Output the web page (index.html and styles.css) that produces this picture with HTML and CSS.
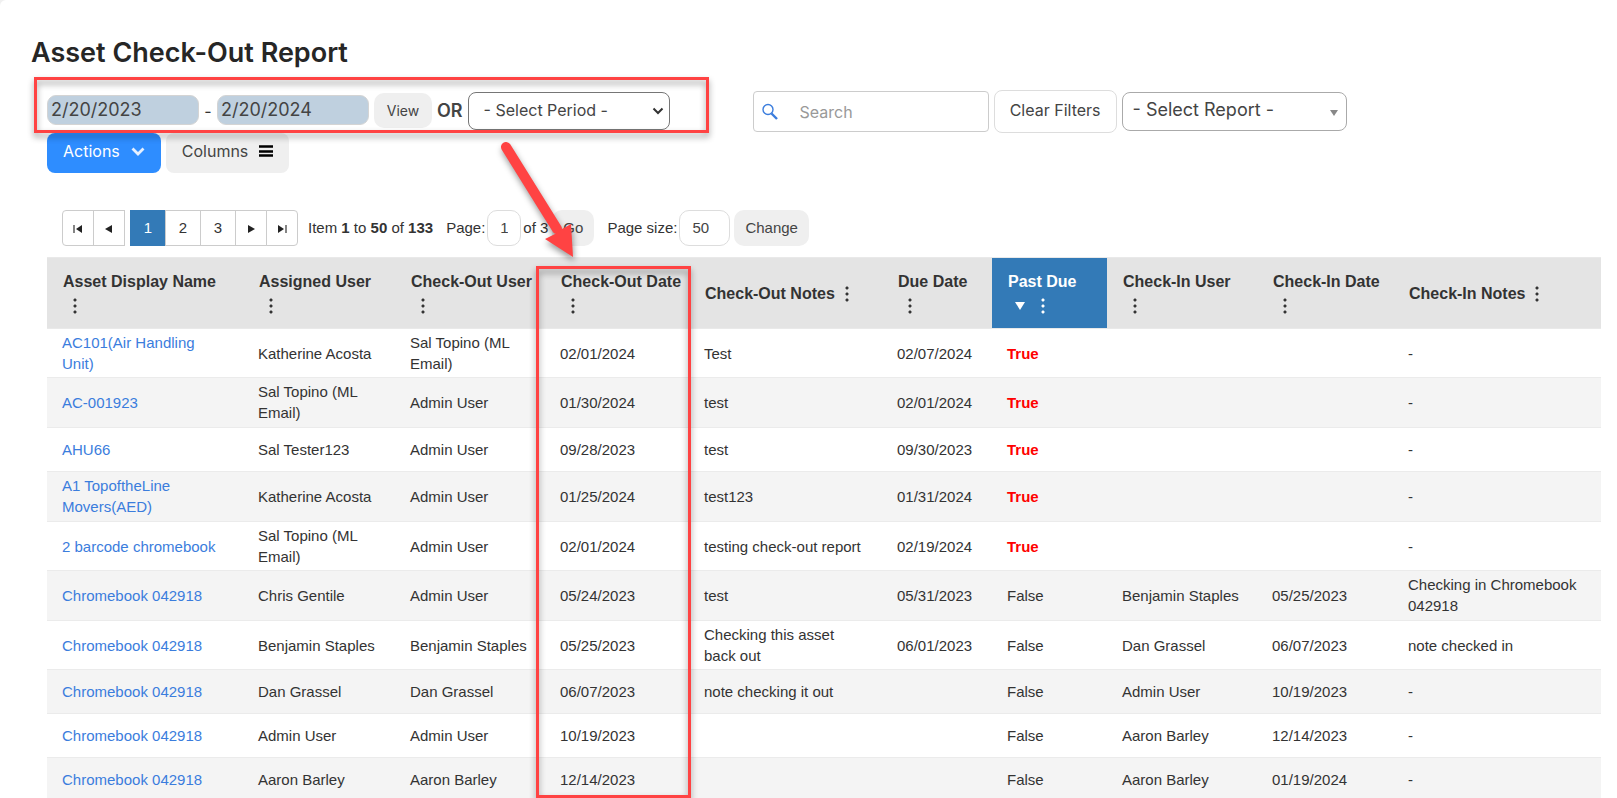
FILE: index.html
```html
<!DOCTYPE html>
<html lang="en">
<head>
    <meta charset="UTF-8">
    <meta name="viewport" content="width=device-width, initial-scale=1.0">
    <title>Asset Check-Out Report</title>
    <link rel="stylesheet" href="styles.css">
</head>
<body>
    <main class="page">
        <h1>Asset Check-Out Report</h1>

        <div class="content">
            <div class="toolbar">
                <div class="period-group">
                    <input class="date-input" type="text" value="2/20/2023" aria-label="Start date">
                    <span class="dash">-</span>
                    <input class="date-input" type="text" value="2/20/2024" aria-label="End date">
                    <button class="btn btn-view" type="button">View</button>
                    <strong class="or">OR</strong>
                    <div class="select-wrap">
                        <select class="period-select" aria-label="Period">
                            <option>- Select Period -</option>
                        </select>
                        <svg class="caret" width="12" height="8" viewBox="0 0 12 8"><path d="M1.5 1.5 L6 6 L10.5 1.5" fill="none" stroke="#333" stroke-width="2"/></svg>
                    </div>
                </div>
                <div class="search-group">
                    <div class="search-box">
                        <svg width="18" height="18" viewBox="0 0 18 18"><circle cx="6" cy="6.5" r="5" fill="none" stroke="#3b7ddd" stroke-width="1.4"/><path d="M9.5 10.5 L15 16" stroke="#3b7ddd" stroke-width="2.4"/></svg>
                        <input type="text" placeholder="Search" aria-label="Search">
                    </div>
                    <button class="btn-clear" type="button">Clear Filters</button>
                    <div class="select-wrap">
                        <select class="report-select" aria-label="Report">
                            <option>- Select Report -</option>
                        </select>
                        <svg class="caret caret-solid" width="8" height="6" viewBox="0 0 8 6"><path d="M0 0 H8 L4 6 Z" fill="#888"/></svg>
                    </div>
                </div>
            </div>

            <div class="actions">
                <button class="btn btn-actions" type="button">Actions
                    <svg width="14" height="10" viewBox="0 0 14 10"><path d="M1.5 2.5 L7 8 L12.5 2.5" fill="none" stroke="#e6f0ff" stroke-width="2.8"/></svg>
                </button>
                <button class="btn btn-columns" type="button">Columns
                    <svg width="14" height="12" viewBox="0 0 14 12"><path d="M0 1.5 H14 M0 6.5 H14 M0 10.5 H14" stroke="#000" stroke-width="2.6"/></svg>
                </button>
            </div>

            <div class="pager">
                <div class="pages pages-prev">
                    <button type="button" aria-label="First page"><svg width="10" height="10" viewBox="0 0 10 10"><path d="M1 1 V9" stroke="#333" stroke-width="1.2"/><path d="M9 1 V9 L3 5 Z" fill="#222"/></svg></button>
                    <button type="button" aria-label="Previous page"><svg width="10" height="10" viewBox="0 0 10 10"><path d="M8 1 V9 L1 5 Z" fill="#222"/></svg></button>
                </div>
                <div class="pages pages-next">
                    <button class="num active" type="button">1</button>
                    <button class="num" type="button">2</button>
                    <button class="num" type="button">3</button>
                    <button type="button" aria-label="Next page"><svg width="10" height="10" viewBox="0 0 10 10"><path d="M2 1 V9 L9 5 Z" fill="#222"/></svg></button>
                    <button type="button" aria-label="Last page"><svg width="10" height="10" viewBox="0 0 10 10"><path d="M9 1 V9" stroke="#333" stroke-width="1.2"/><path d="M1 1 V9 L7 5 Z" fill="#222"/></svg></button>
                </div>
                <span class="info">Item <b>1</b> to <b>50</b> of <b>133</b></span>
                <div class="pager-form">
                    <label for="page">Page:</label>
                    <input class="page-input" id="page" type="text" value="1">
                    <span>of 3</span>
                    <button class="btn-pager" type="button">Go</button>
                </div>
                <div class="pager-form">
                    <label for="pageSize">Page size:</label>
                    <input class="size-input" id="pageSize" type="text" value="50">
                    <button class="btn-pager" type="button">Change</button>
                </div>
            </div>

            <table class="report">
                <colgroup>
                    <col class="col-asset">
                    <col class="col-assigned">
                    <col class="col-user">
                    <col class="col-out-date">
                    <col class="col-out-notes">
                    <col class="col-due">
                    <col class="col-past">
                    <col class="col-user">
                    <col class="col-in-date">
                    <col class="col-in-notes">
                </colgroup>
                <thead>
                    <tr>
                        <th><span>Asset Display Name</span><i class="dots"></i></th>
                        <th><span>Assigned User</span><i class="dots"></i></th>
                        <th><span>Check-Out User</span><i class="dots"></i></th>
                        <th><span>Check-Out Date</span><i class="dots"></i></th>
                        <th><span>Check-Out Notes</span><i class="dots"></i></th>
                        <th><span>Due Date</span><i class="dots"></i></th>
                        <th class="sorted"><span>Past Due</span><i class="sort"></i><i class="dots"></i></th>
                        <th><span>Check-In User</span><i class="dots"></i></th>
                        <th><span>Check-In Date</span><i class="dots"></i></th>
                        <th><span>Check-In Notes</span><i class="dots"></i></th>
                    </tr>
                </thead>
                <tbody>
                    <tr>
                        <td><a href="#">AC101(Air Handling Unit)</a></td><td>Katherine Acosta</td><td>Sal Topino (ML Email)</td><td>02/01/2024</td><td>Test</td>
                        <td>02/07/2024</td><td class="late">True</td><td></td><td></td><td>-</td>
                    </tr>
                    <tr>
                        <td><a href="#">AC-001923</a></td><td>Sal Topino (ML Email)</td><td>Admin User</td><td>01/30/2024</td><td>test</td>
                        <td>02/01/2024</td><td class="late">True</td><td></td><td></td><td>-</td>
                    </tr>
                    <tr>
                        <td><a href="#">AHU66</a></td><td>Sal Tester123</td><td>Admin User</td><td>09/28/2023</td><td>test</td>
                        <td>09/30/2023</td><td class="late">True</td><td></td><td></td><td>-</td>
                    </tr>
                    <tr>
                        <td><a href="#">A1 TopoftheLine Movers(AED)</a></td><td>Katherine Acosta</td><td>Admin User</td><td>01/25/2024</td><td>test123</td>
                        <td>01/31/2024</td><td class="late">True</td><td></td><td></td><td>-</td>
                    </tr>
                    <tr>
                        <td><a href="#">2 barcode chromebook</a></td><td>Sal Topino (ML Email)</td><td>Admin User</td><td>02/01/2024</td><td>testing check-out report</td>
                        <td>02/19/2024</td><td class="late">True</td><td></td><td></td><td>-</td>
                    </tr>
                    <tr>
                        <td><a href="#">Chromebook 042918</a></td><td>Chris Gentile</td><td>Admin User</td><td>05/24/2023</td><td>test</td>
                        <td>05/31/2023</td><td>False</td><td>Benjamin Staples</td><td>05/25/2023</td><td>Checking in Chromebook 042918</td>
                    </tr>
                    <tr>
                        <td><a href="#">Chromebook 042918</a></td><td>Benjamin Staples</td><td>Benjamin Staples</td><td>05/25/2023</td><td>Checking this asset back out</td>
                        <td>06/01/2023</td><td>False</td><td>Dan Grassel</td><td>06/07/2023</td><td>note checked in</td>
                    </tr>
                    <tr>
                        <td><a href="#">Chromebook 042918</a></td><td>Dan Grassel</td><td>Dan Grassel</td><td>06/07/2023</td><td>note checking it out</td>
                        <td></td><td>False</td><td>Admin User</td><td>10/19/2023</td><td>-</td>
                    </tr>
                    <tr>
                        <td><a href="#">Chromebook 042918</a></td><td>Admin User</td><td>Admin User</td><td>10/19/2023</td><td></td>
                        <td></td><td>False</td><td>Aaron Barley</td><td>12/14/2023</td><td>-</td>
                    </tr>
                    <tr>
                        <td><a href="#">Chromebook 042918</a></td><td>Aaron Barley</td><td>Aaron Barley</td><td>12/14/2023</td><td></td>
                        <td></td><td>False</td><td>Aaron Barley</td><td>01/19/2024</td><td>-</td>
                    </tr>
                </tbody>
            </table>
        </div>

        <!-- callouts drawn over the report -->
        <div class="callout callout-period"></div>
        <div class="callout callout-date"></div>
        <svg class="callout-arrow" width="90" height="130" viewBox="0 0 90 130">
            <path d="M16 17 L67 99" stroke="#ff4343" stroke-width="10" stroke-linecap="round"/>
            <path d="M83 127 L55 109 L65 104 L72 99 L81 94 Z" fill="#ff4343"/>
        </svg>
    </main>
</body>
</html>
```
FILE: styles.css
```css
* {
    box-sizing: border-box;
}
body {
    margin: 0;
    background-color: #f0f0f0;
    color: #333;
    font-family: "Liberation Sans", Arial, sans-serif;
    font-size: 15px;
}
.page {
    position: relative;
    height: 100vh;
    overflow: hidden;
    padding-top: 33px;
    background-color: #fff;
    border-top-left-radius: 6px;
}
h1 {
    margin: 0 0 17px 31px;
    font-family: Inter, sans-serif;
    font-size: 27px;
    font-weight: 600;
    line-height: 40px;
    color: #262626;
}
.content {
    padding: 0 16px 0 47px;
}
button, input, select {
    font-family: inherit;
    color: #444;
}
.btn {
    border: 0;
    border-radius: 8px;
    background-color: #efefef;
}

/* Toolbar */
.toolbar {
    display: flex;
    align-items: center;
    gap: 83px;
    height: 43px;
}
.toolbar, .actions {
    font-family: Inter, sans-serif;
}
.period-group, .search-group {
    display: flex;
    align-items: center;
    gap: 5px;
}
.period-group {
    padding-bottom: 2px;
}
.date-input {
    width: 152px;
    height: 30px;
    margin-bottom: 2px;
    padding: 0 3px 1px;
    border: 1px solid #d4d4d4;
    border-radius: 9px;
    background-color: #bfd0df;
    font-size: 18px;
}
.dash {
    width: 8px;
    text-align: center;
    font-size: 16px;
}
.btn-view {
    width: 58px;
    height: 35px;
    border-radius: 10px;
    font-size: 14px;
}
.or {
    font-size: 18px;
    font-weight: 600;
    color: #444;
}
.select-wrap {
    position: relative;
}
.select-wrap select {
    appearance: none;
    border-radius: 8px;
    background-color: #fff;
}
.period-select {
    width: 202px;
    height: 38px;
    padding: 0 15px 2px;
    border: 1px solid #767676;
    font-size: 16px;
}
.report-select {
    width: 225px;
    height: 39px;
    padding: 0 10px 4px;
    border: 1px solid #aaa;
    font-size: 18px;
}
.caret {
    position: absolute;
    right: 6px;
    top: 15px;
    pointer-events: none;
}
.caret-solid {
    right: 9px;
    top: 18px;
}
.search-box {
    display: flex;
    align-items: center;
    gap: 18px;
    width: 236px;
    height: 41px;
    padding-left: 8px;
    border: 1px solid #ccc;
    border-radius: 4px;
}
.search-box input {
    flex: 1;
    min-width: 0;
    border: 0;
    outline: 0;
    font-size: 16px;
}
.search-box input::placeholder {
    color: #999;
}
.btn-clear {
    width: 123px;
    height: 43px;
    padding: 0 0 3px;
    border: 1px solid #ddd;
    border-radius: 8px;
    background-color: #fff;
    font-size: 16px;
}
.actions {
    display: flex;
    gap: 5px;
}
.actions .btn {
    display: flex;
    align-items: center;
    gap: 11px;
    height: 40px;
    padding: 0 16px 4px;
    font-size: 16px;
}
.actions .btn-actions {
    background-color: #2e8dff;
    color: #fff;
}

/* Pager */
.pager {
    display: flex;
    align-items: center;
    margin: 37px 0 11px 15px;
}
.pages {
    display: flex;
}
.pages button {
    width: 32px;
    height: 36px;
    margin-right: -1px;
    padding: 0;
    border: 1px solid #ccc;
    background-color: #fff;
    font-size: 15px;
    color: #333;
}
.pages .num {
    width: 36px;
    padding-bottom: 2px;
}
.pages .active {
    border-color: #337ab7;
    background-color: #337ab7;
    color: #fff;
}
.pages-prev {
    margin-right: 6px;
}
.pages-prev button:first-child {
    border-radius: 4px 0 0 4px;
}
.pages-next button:last-child {
    border-radius: 0 4px 4px 0;
}
.info {
    margin-left: 11px;
    padding-bottom: 2px;
}
.pager-form {
    display: flex;
    align-items: center;
    gap: 2px;
    margin-left: 13px;
}
.pager-form label, .pager-form span {
    padding-bottom: 2px;
}
.pager-form input {
    height: 36px;
    padding: 0 12px 2px;
    border: 1px solid #ddd;
    border-radius: 10px;
    font-size: 15px;
}
.page-input {
    width: 34px;
}
.size-input {
    width: 51px;
}
.btn-pager {
    height: 36px;
    margin-left: 2px;
    padding: 0 11px 2px;
    border: 0;
    border-radius: 10px;
    background-color: #efefef;
    font-size: 15px;
}

/* Report table */
.report {
    width: 100%;
    table-layout: fixed;
    border-collapse: separate;
    border-spacing: 0;
}
.col-asset { width: 196px; }
.col-assigned { width: 152px; }
.col-user { width: 150px; }
.col-out-date { width: 144px; }
.col-out-notes { width: 193px; }
.col-due { width: 110px; }
.col-past { width: 115px; }
.col-in-date { width: 136px; }
.col-in-notes { width: 208px; }
.report th {
    height: 72px;
    padding: 12px 16px;
    border-top: 1px solid #e9e9e9;
    border-bottom: 1px solid #e9e9e9;
    background-color: #e4e4e4;
    font-size: 16px;
    line-height: 23px;
    text-align: left;
}
.report th span {
    white-space: nowrap;
}
.report .sorted {
    background-color: #337ab7;
    color: #fff;
}
.dots {
    display: inline-block;
    width: 24px;
    height: 18px;
    vertical-align: middle;
    background: radial-gradient(circle, currentColor 1px, transparent 2px) center top / 6px 6px repeat-y;
}
.sort {
    display: inline-block;
    margin: 0 6px 0 7px;
    vertical-align: middle;
    border: 5px solid transparent;
    border-top: 8px solid #fff;
    border-bottom: 0;
}
.report td {
    height: 44px;
    padding: 3px 15px;
    border-bottom: 1px solid #ebebeb;
    line-height: 21px;
}
.report tbody tr:nth-child(even) {
    background-color: #f4f4f4;
}
.report tbody tr:nth-child(even) td {
    padding-bottom: 4px;
}
.report a {
    color: #3b7ddd;
    text-decoration: none;
}
.report .late {
    color: #f00;
    font-weight: bold;
}

/* Callouts */
.callout {
    position: absolute;
    border: 3px solid #ff4343;
    filter: drop-shadow(0 4px 3px rgba(0, 0, 0, 0.4));
}
.callout-period {
    left: 34px;
    top: 77px;
    width: 675px;
    height: 56px;
}
.callout-date {
    left: 536px;
    top: 266px;
    width: 155px;
    bottom: 0;
}
.callout-arrow {
    position: absolute;
    left: 490px;
    top: 130px;
    overflow: visible;
    filter: drop-shadow(1px 4px 3px rgba(0, 0, 0, 0.4));
}
```
